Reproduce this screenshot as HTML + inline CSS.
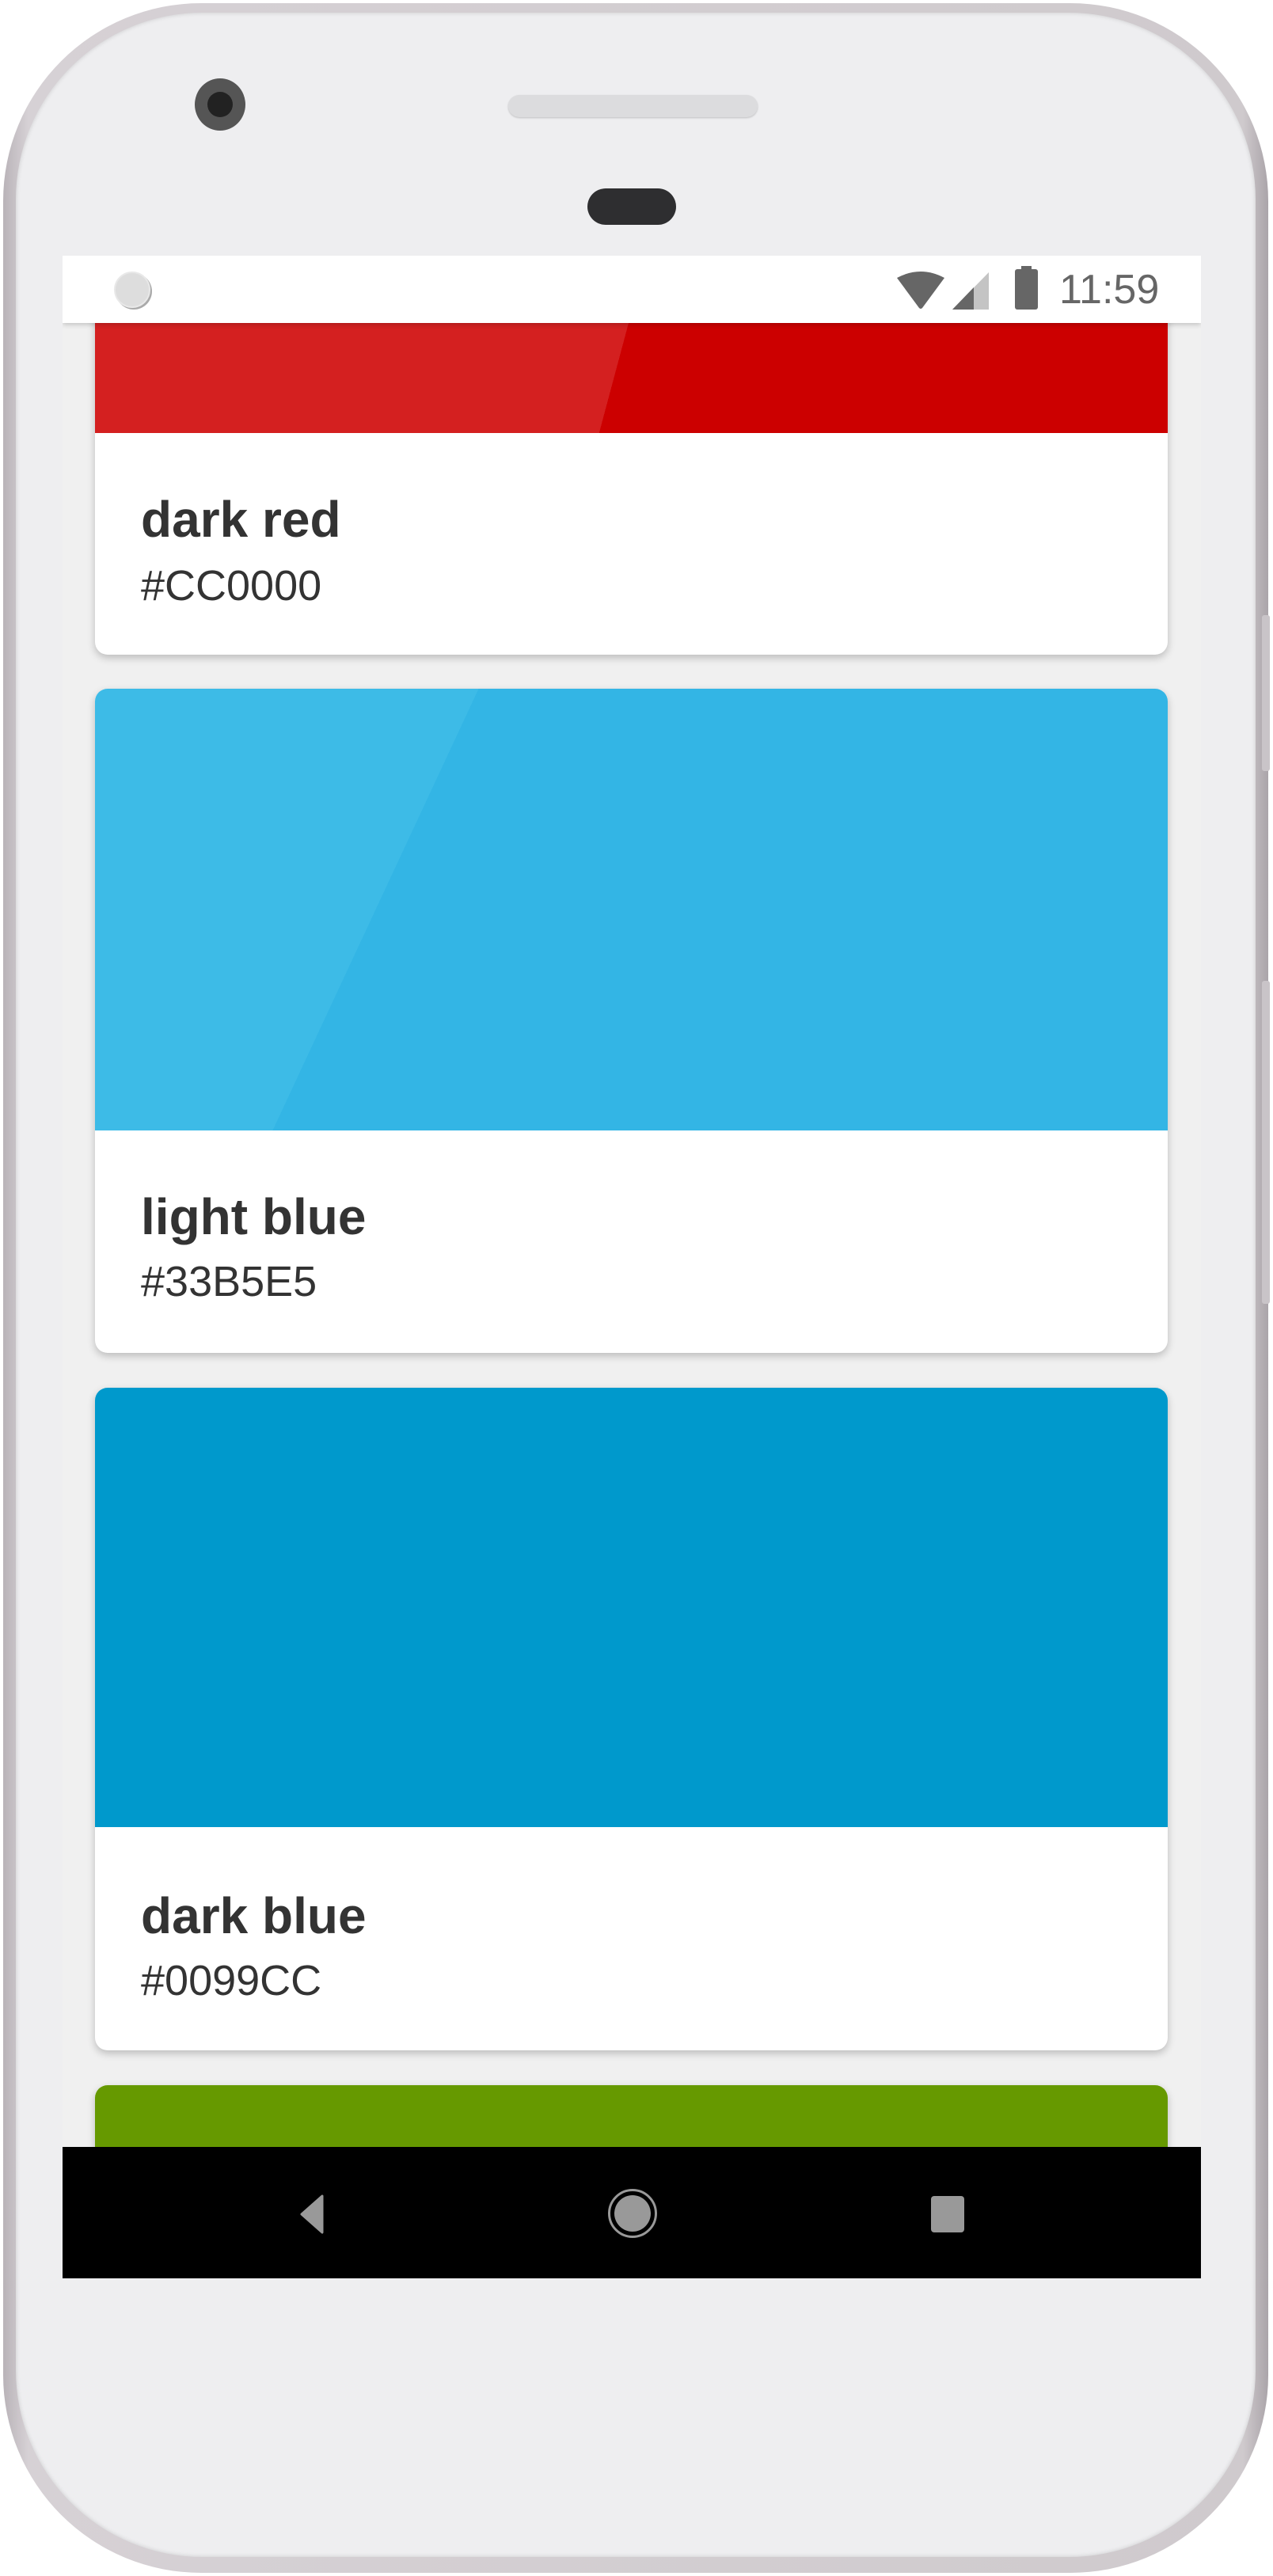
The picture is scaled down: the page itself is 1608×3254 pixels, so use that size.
<!DOCTYPE html>
<html><head><style>
*{margin:0;padding:0;box-sizing:border-box}
body{width:1608px;height:3254px;background:#fff;position:relative;overflow:hidden;font-family:"Liberation Sans",sans-serif}
.phone{position:absolute;left:4px;top:4px;width:1598px;height:3246px;border-radius:250px;background:linear-gradient(90deg,#b9b3b8,#d6d1d5 2%,#cfcacd 98%,#aaa4a9);}
.bezel{position:absolute;left:20px;top:16px;width:1566px;height:3214px;border-radius:236px;background:#eeeef0;box-shadow:inset 0 0 6px rgba(0,0,0,.15)}
.screen{position:absolute;left:79px;top:323px;width:1438px;height:2555px;background:#f0f0f0;overflow:hidden}
.sb{position:absolute;left:0;top:0;width:1438px;height:85px;background:#fff;z-index:5;box-shadow:0 2px 6px rgba(0,0,0,.2)}
.card{position:absolute;left:41px;width:1355px;background:#fff;border-radius:16px;overflow:hidden;box-shadow:0 4px 10px rgba(0,0,0,.22)}
.col{position:absolute;left:0;top:0;width:100%}
.t{position:absolute;left:58px;font-size:64px;font-weight:bold;color:#333;line-height:1}
.h{position:absolute;left:58px;font-size:54px;color:#333;line-height:1}
.nav{position:absolute;left:0;top:2389px;width:1438px;height:166px;background:#000;z-index:5}
</style></head><body>
<div class="phone"></div>
<div style="position:absolute;left:1594px;top:777px;width:10px;height:197px;background:#c9c4c8;border-radius:3px"></div>
<div style="position:absolute;left:1594px;top:1239px;width:10px;height:408px;background:#c9c4c8;border-radius:3px"></div>
<div class="bezel"></div>
<div style="position:absolute;left:246px;top:99px;width:64px;height:66px;border-radius:50%;background:#555;"></div>
<div style="position:absolute;left:262px;top:116px;width:32px;height:32px;border-radius:50%;background:#222"></div>
<div style="position:absolute;left:642px;top:120px;width:315px;height:28px;border-radius:14px;background:#dcdcde;box-shadow:0 1px 2px rgba(0,0,0,.2)"></div>
<div style="position:absolute;left:742px;top:238px;width:112px;height:46px;border-radius:23px;background:#2e2e30"></div>
<div class="screen">
 <div class="sb">
  <div style="position:absolute;left:65px;top:20px;width:46px;height:46px;border-radius:50%;background:#ddd;border:2px solid #e8e8e8;box-shadow:2px 2px 0 #aaa"></div>
  <svg style="position:absolute;left:1054px;top:18px" width="60" height="50" viewBox="0 0 60 50"><path d="M0 10 Q30 -6 60 10 L32 48 Q30 50 28 48 Z" fill="#666"/></svg>
  <svg style="position:absolute;left:1124px;top:21px" width="48" height="48" viewBox="0 0 48 48"><path d="M46 0 L46 47 L0 47 Z" fill="#c4c4c4"/><path d="M27 19 L27 47 L0 47 Z" fill="#666"/></svg>
  <div style="position:absolute;left:1203px;top:17px;width:29px;height:51px;background:#666;border-radius:3px"></div>
  <div style="position:absolute;left:1211px;top:13px;width:13px;height:6px;background:#666"></div>
  <div style="position:absolute;left:1259px;top:17px;font-size:52px;color:#666;line-height:1">11:59</div>
 </div>
 <div class="card" style="top:-80px;height:584px"><div class="col" style="height:304px;background:linear-gradient(105deg,#d42020 0 50%,#cc0000 50%)"></div><div class="t" style="top:381px">dark red</div><div class="h" style="top:470px">#CC0000</div></div>
 <div class="card" style="top:547px;height:839px"><div class="col" style="height:558px;background:linear-gradient(115deg,#3dbbe7 0 30%,#33b5e5 30%)"></div><div class="t" style="top:635px">light blue</div><div class="h" style="top:722px">#33B5E5</div></div>
 <div class="card" style="top:1430px;height:837px"><div class="col" style="height:555px;background:#0099cc"></div><div class="t" style="top:635px">dark blue</div><div class="h" style="top:722px">#0099CC</div></div>
 <div class="card" style="top:2311px;height:400px"><div class="col" style="height:400px;background:#669900"></div></div>
 <div class="nav">
  <svg style="position:absolute;left:300px;top:60px" width="30" height="50" viewBox="0 0 30 50"><path d="M28 2 L2 25 L28 48 Z" fill="#999" stroke="#999" stroke-width="3" stroke-linejoin="round"/></svg>
  <div style="position:absolute;left:689px;top:53px;width:62px;height:62px;border-radius:50%;border:3px solid #999"></div>
  <div style="position:absolute;left:697px;top:61px;width:46px;height:46px;border-radius:50%;background:#999"></div>
  <div style="position:absolute;left:1097px;top:62px;width:42px;height:46px;border-radius:4px;background:#999"></div>
 </div>
</div>
</body></html>
